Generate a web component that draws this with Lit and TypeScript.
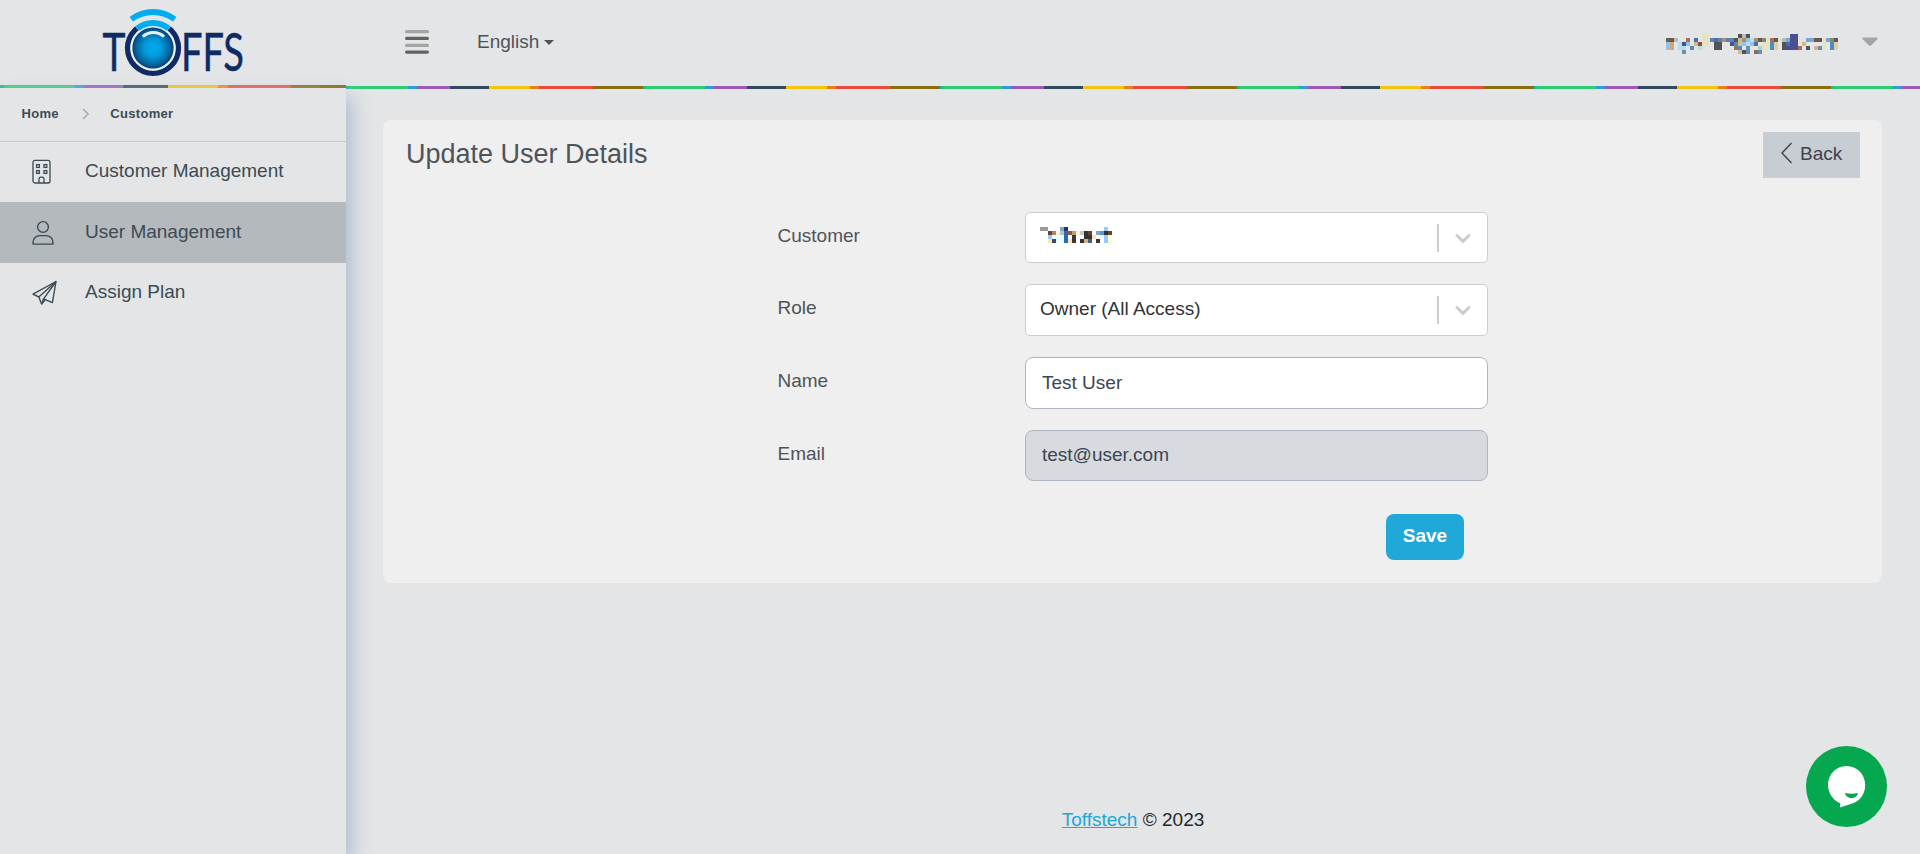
import { LitElement, html, css, svg } from "lit";
import { customElement, property } from "lit/decorators.js";

type Cell = [number, number, string];

const PAL: Record<string, string> = {
  a: "#5e6458", b: "#6b5550", c: "#b8bbb8", d: "#505458", e: "#e3e3c6", f: "#4c5092",
  g: "#a86e4e", h: "#4c6cac", i: "#5f81aa", j: "#a89072", k: "#d8bc90", l: "#90c4e6",
  m: "#b4e0e8", n: "#4c8cc0", o: "#e0cfa6", p: "#78a8d0", q: "#808878", r: "#d0a878",
  s: "#805050", t: "#e0b282", u: "#6c8cb8", v: "#807060", w: "#b8d0b8",
  A: "#999a96", B: "#80a8c4", C: "#303058", D: "#90ccff", E: "#6b4232", F: "#a88868",
  G: "#ffeedd", H: "#b0c8cc", I: "#3068b0", J: "#a05038", K: "#b8a070", L: "#c8c8d0",
  M: "#333333", N: "#5898d8", O: "#e8ffff", P: "#ffe4b8", Q: "#ffffcc", R: "#3c4870",
  S: "#3c3830", T: "#d8b088", U: "#486080",
};

const ACCOUNT = [
  ".........ee.......dcd..........ff..........",
  "abc..g.h.eeihijiidkjlmjbqegbecpff..ppbbepqb",
  "lr.mfl.tsee.dd..fnklmlh.eeno.dhff.t....e.no",
  "lr.mm.n.me..dd...gn.u..weeno.dfffg.d.tue.no",
  "....u.............kdu.vu...................",
];
const CUSTOMER = [
  "AA...BC.........D.",
  "..EFGHIJKGLME.BNME",
  "..D.OOI.S..MMP..DQ",
  "..PROOIPS.MTU.S.DQ",
];

@customElement("pixel-strip")
class PixelStrip extends LitElement {
  @property({ attribute: false }) rows: string[] = [];
  static styles = css`
    :host { display: block; line-height: 0; }
    svg { display: block; }
  `;
  render() {
    const cells: Cell[] = [];
    this.rows.forEach((r, y) =>
      [...r].forEach((ch, x) => { if (ch !== ".") cells.push([x, y, PAL[ch]]); }));
    const w = Math.max(0, ...this.rows.map((r) => r.length));
    const h = this.rows.length;
    return html`<svg width=${w * 4} height=${h * 4} viewBox="0 0 ${w} ${h}" shape-rendering="crispEdges">
      ${cells.map(([x, y, c]) => svg`<rect x=${x} y=${y} width="1" height="1" fill=${c}></rect>`)}
    </svg>`;
  }
}

const logo = html`<svg width="156" height="78" viewBox="95 7 156 78">
  <defs>
    <radialGradient id="ball"><stop offset="0" stop-color="#00adf0"/><stop offset=".4" stop-color="#039cdc"/><stop offset=".8" stop-color="#0666a0"/><stop offset="1" stop-color="#0a3f78"/></radialGradient>
  </defs>
  <g class="word">
    <text x="102.500" y="70.500" font-size="51.500" textLength="23" lengthAdjust="spacingAndGlyphs">T</text>
    <text x="181" y="70.500" font-size="51.500" textLength="63" lengthAdjust="spacingAndGlyphs">FFS</text>
  </g>
  <g fill="none">
    <circle cx="153" cy="48" r="25.3" stroke="#0e2b66" stroke-width="5.6"/>
    <circle cx="153" cy="48" r="22" stroke="#eef1f4" stroke-width="1.6"/>
    <path d="M136.9 28.5A25.3 25.3 0 0 1 169.1 28.5" stroke="#e3e5e6" stroke-width="7"/>
    <path d="M137.3 28.5A25.2 25.2 0 0 1 168.7 28.5" stroke="#00adf0" stroke-width="5.8"/>
    <path d="M131.3 19.3A36 36 0 0 1 174.7 19.3" stroke="#00adf0" stroke-width="5.8"/>
  </g>
  <circle cx="153" cy="48" r="20.6" fill="url(#ball)"/>
  <path d="M142.8 36.6A15.5 15.5 0 0 1 164 36.6" fill="none" stroke="#e6f1f7" stroke-width="3"/>
</svg>`;

const building = html`<svg width="26" height="26" viewBox="0 0 26 26" fill="none" stroke="currentColor" stroke-width="1.3">
  <rect x="1" y="1.400" width="17" height="22.600" rx="2"/>
  <rect x="4.600" y="5.600" width="2.800" height="2.800"/><rect x="12" y="5.600" width="2.800" height="2.800"/>
  <rect x="4.600" y="11.600" width="2.800" height="2.800"/><rect x="12" y="11.600" width="2.800" height="2.800"/>
  <path d="M7 24V20.200a2 2 0 0 1 2-2h1a2 2 0 0 1 2 2V24"/>
</svg>`;
const person = html`<svg width="26" height="26" viewBox="0 0 26 26" fill="none" stroke="currentColor" stroke-width="1.4">
  <circle cx="11" cy="7" r="5.4"/>
  <path d="M1 24.100V22.500C1 18.500 4 15.600 8 15.600H14C18 15.600 21 18.500 21 22.500V24.100Z" stroke-linejoin="round"/>
</svg>`;
const plane = html`<svg width="26" height="26" viewBox="0 0 26 26" fill="none" stroke="currentColor" stroke-width="1.4" stroke-linejoin="round">
  <path d="M24 1.500L1 14.200L6.800 17L9.600 24L13.200 19.800"/>
  <path d="M24 1.500L20.400 22.600L11.600 18.800Z"/>
  <path d="M24 1.500L6.800 17M11.600 18.800L9.600 24"/>
</svg>`;

@customElement("app-root")
class AppRoot extends LitElement {
  static styles = css`
    :host {
      display: block; height: 854px; overflow: hidden; box-sizing: border-box;
      font-family: "Liberation Sans", Arial, sans-serif; font-size: 19px; line-height: 28px;
      color: #4f5459; background: #e3e5e6;
    }
    * { box-sizing: border-box; }
    svg { display: block; flex: none; }
    .page { display: grid; grid-template-columns: 346px 1fr; height: 854px; }
    .side { display: flex; flex-direction: column; color: #3c4b54; position: relative; z-index: 1; }
    .brand { height: 85px; padding: 7px 0 0 95px; }
    .word { fill: #0e2b66; stroke: #0e2b66; stroke-width: .5px; font-family: "Lato", sans-serif; }
    .bar-side { height: 3px; background: linear-gradient(90deg,
      #2bc0a0 0 4px, #48d084 4px 74px, #4ba3e0 74px 84px, #a56cc0 84px 123px, #4a5f72 123px 168px,
      #f0c830 168px 218px, #e6913c 218px 228px, #ea6557 228px 291px, #927828 291px 320px, #8a7018 320px); }
    .bar-main { height: 3px; background: repeating-linear-gradient(90deg,
      #1abc9c 0 3px, #2ecc71 3px 62px, #3498db 62px 71px, #9b59b6 71px 104px, #34495e 104px 143px,
      #f1c40f 143px 184px, #e67e22 184px 193px, #e74c3c 193px 247px, #8a6d10 247px 297px); }
    .side-body { flex: 1; background: #e3e5e6; box-shadow: 7px 9px 18px #b4bed4; }
    .crumbs { display: flex; align-items: center; height: 54px; padding: 0 0 2px 21.500px; border-bottom: 1px solid #c8cbcd;
      font-size: 13px; font-weight: 700; letter-spacing: .3px; }
    .crumbs svg { margin: 1px 20.500px 0 23px; }
    .item { display: flex; align-items: center; height: 60.400px; padding-left: 32px; }
    .item svg { margin-right: 27px; }
    .item span { padding-bottom: 1.500px; }
    .item.on { background: #b4b9bd; }
    .main { display: flex; flex-direction: column; min-width: 0; }
    .top { display: flex; align-items: center; height: 86px; padding: 0 42px 2px 59px; }
    .lang { margin-left: 48px; display: flex; align-items: center; gap: 5px; }
    .account { margin-left: auto; display: flex; align-items: center; gap: 24px; }
    .account pixel-strip { padding-top: 4px; }
    .tri { width: 16px; height: 10px; margin-bottom: 1px; }
    .card { margin: 31px 38px 0 37px; height: 462.600px; border-radius: 8px; background: #efefef; }
    .card-head { display: flex; justify-content: space-between; align-items: flex-start; height: 70px;
      padding: 12px 22px 0 23px; border-bottom: 1px solid #f1f1f1; }
    .title { font-size: 27px; line-height: 44px; }
    .back { display: flex; align-items: center; gap: 8px; width: 97px; height: 46px; padding: 0 0 2px 18px;
      background: #c8ccd3; color: #3c4250; }
    .back svg { margin-bottom: 2px; }
    .form { display: grid; grid-template-columns: 247.500px 463px; grid-auto-rows: 51.600px; row-gap: 21px; padding: 21.800px 0 0 394.500px; }
    .label { padding-top: 10px; }
    .field { display: flex; align-items: center; border: 1px solid #b0b6c1; border-radius: 8px;
      background: #fff; color: #3c4552; padding: 0 16px; }
    .field.sel { border-color: #ccc; border-radius: 5px; color: #303336; padding: 0 15px 0 14px; justify-content: space-between; }
    .field.sel span { padding-bottom: 1.500px; }
    .field.off { background: #d7dade; }
    .drop { display: flex; align-items: center; gap: 15px; }
    .rule { width: 2px; height: 28px; background: #ccc; }
    .chosen { margin-top: -5.200px; }
    .save { display: flex; align-items: center; justify-content: center; width: 78px; height: 46px;
      margin: 32.800px 0 0 1003px; border-radius: 8px; background: #20a8d8; color: #fff; font-weight: 700; padding-bottom: 1px; }
    .foot { margin: auto 0 20px; text-align: center; color: #23282c; }
    .foot a { color: #20a8d8; text-decoration: underline; }
    .chat { position: absolute; left: 1806px; top: 746px; }
  `;

  private drop() {
    return html`<div class="drop"><div class="rule"></div>
      <svg width="18" height="18" viewBox="0 0 18 18" fill="none" stroke="#ccc" stroke-width="3" stroke-linecap="round"><path d="M3 6.500L9 12.300L15 6.500"/></svg></div>`;
  }

  render() {
    return html`<div class="page">
      <div class="side">
        <div class="brand">${logo}</div>
        <div class="bar-side"></div>
        <div class="side-body">
          <div class="crumbs"><span>Home</span>
            <svg width="8" height="12" viewBox="0 0 8 12" fill="none" stroke="#a9adb0" stroke-width="1.6"><path d="M1 1L6 6L1 11"/></svg>
            <span>Customer</span></div>
          <div class="item">${building}<span>Customer Management</span></div>
          <div class="item on">${person}<span>User Management</span></div>
          <div class="item">${plane}<span>Assign Plan</span></div>
        </div>
      </div>
      <div class="main">
        <div class="top">
          <svg width="24" height="24" viewBox="0 0 24 24"><g fill="#a3a4a4"><rect y="0" width="24" height="3.300" rx="1.600"/><rect y="13.700" width="24" height="3.300" rx="1.600"/></g><g fill="#626262"><rect y="6.800" width="24" height="3.300" rx="1.600"/><rect y="20.400" width="24" height="3.300" rx="1.600"/></g></svg>
          <div class="lang"><span>English</span><svg width="10" height="5" viewBox="0 0 10 5"><path d="M0 0H10L5 5Z" fill="#4f5459"/></svg></div>
          <div class="account"><pixel-strip .rows=${ACCOUNT}></pixel-strip>
            <svg class="tri" viewBox="0 0 16 10"><path d="M1.200 .5H14.800Q16 1 15.200 2.200L9 8.600Q8 9.500 7 8.600L.8 2.200Q0 1 1.200 .5Z" fill="#a3a5a5"/></svg></div>
        </div>
        <div class="bar-main"></div>
        <div class="card">
          <div class="card-head"><div class="title">Update User Details</div>
            <div class="back"><svg width="11" height="22" viewBox="0 0 11 22" fill="none" stroke="currentColor" stroke-width="1.400"><path d="M10.500 1L1 11L10.500 21"/></svg><span>Back</span></div></div>
          <div class="form">
            <div class="label">Customer</div><div class="field sel"><pixel-strip class="chosen" .rows=${CUSTOMER}></pixel-strip>${this.drop()}</div>
            <div class="label">Role</div><div class="field sel"><span>Owner (All Access)</span>${this.drop()}</div>
            <div class="label">Name</div><div class="field">Test User</div>
            <div class="label">Email</div><div class="field off">test@user.com</div>
          </div>
          <div class="save">Save</div>
        </div>
        <div class="foot"><a>Toffstech</a> © 2023</div>
      </div>
      <svg class="chat" width="81" height="81" viewBox="0 0 81 81"><circle cx="40.500" cy="40.500" r="40.500" fill="#06a84f"/>
        <path d="M40.500 20C51 20 59.200 28.500 59.200 39C59.200 47.500 54.500 54.500 47 57.200L34 61.400L34.300 57.200C27 54.500 22 47 22 39C22 28.500 30 20 40.500 20Z" fill="#fff"/>
        <path d="M39 47Q45.500 48.500 52 47C51.500 50.500 48.500 52 45.500 52S39.500 50.500 39 47Z" fill="#06a84f"/></svg>
    </div>`;
  }
}
